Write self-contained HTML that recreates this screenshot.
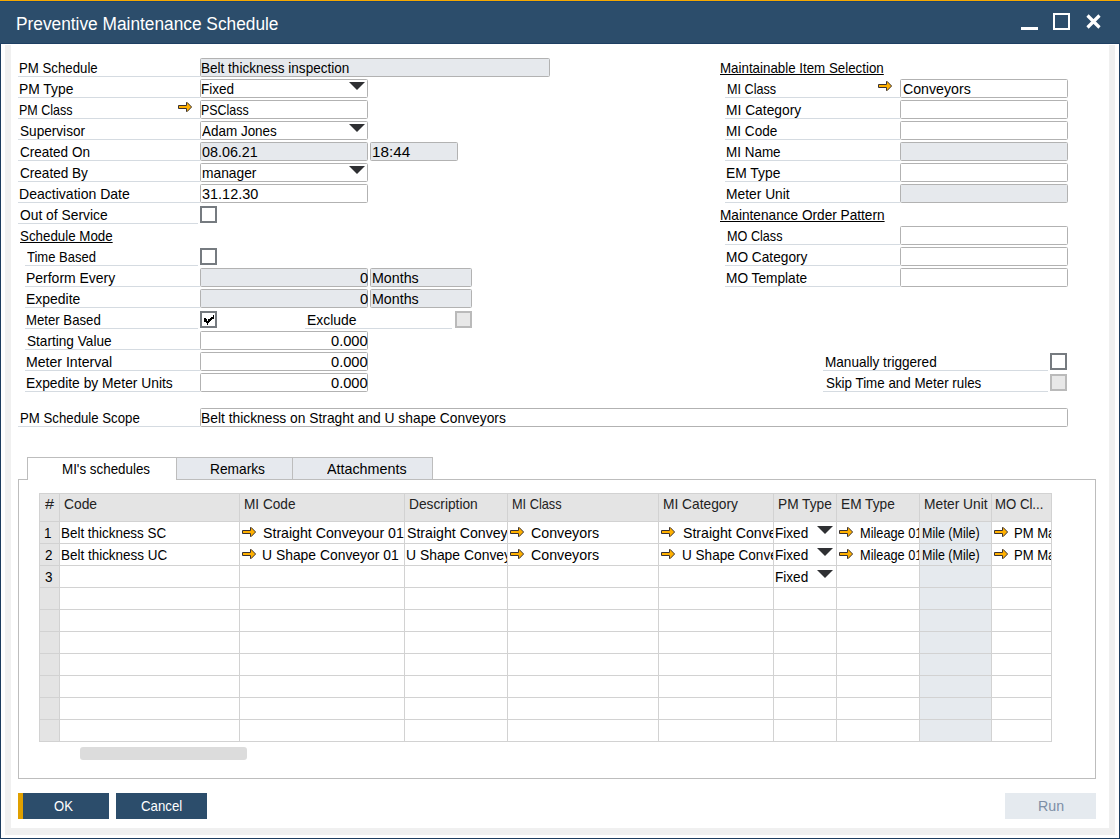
<!DOCTYPE html>
<html><head><meta charset="utf-8"><style>
html,body{margin:0;padding:0;width:1120px;height:839px;overflow:hidden;background:#fff}
body div{position:absolute}
.t{font-family:"Liberation Sans",sans-serif;font-size:14.5px;line-height:17px;color:#000;white-space:nowrap;transform-origin:0 0}
.f{box-sizing:border-box;border:1px solid #b2b2b2;border-radius:1.5px}
u{text-decoration:underline;text-underline-offset:1px}
svg{display:block}
</style></head><body>
<div style="left:0px;top:0px;width:1120px;height:839px;background:#fff"></div>
<div style="left:0px;top:0px;width:1120px;height:1px;background:#f5a800"></div>
<div style="left:0px;top:1px;width:1120px;height:1px;background:#1f4673"></div>
<div style="left:0px;top:2px;width:1120px;height:41px;background:#2c4d6b"></div>
<div style="left:0px;top:43px;width:1120px;height:1px;background:#1e3f62"></div>
<div style="left:0px;top:44px;width:1px;height:795px;background:#1d3d60"></div>
<div style="left:1119px;top:44px;width:1px;height:795px;background:#1d3d60"></div>
<div style="left:0px;top:838px;width:1120px;height:1px;background:#1d3d60"></div>
<div style="left:5px;top:45px;width:6px;height:790px;background:#f0f0f0"></div>
<div style="left:1109px;top:45px;width:6px;height:790px;background:#f0f0f0"></div>
<div style="left:5px;top:828px;width:1110px;height:7px;background:#f0f0f0"></div>
<div class="t" style="left:16.04px;top:11px;transform:scaleX(0.9608);font-size:18px;color:#fff;line-height:26px">Preventive Maintenance Schedule</div>
<div style="left:1021px;top:27px;width:17px;height:3px;background:#fff"></div>
<div style="left:1053px;top:13px;width:17px;height:17px;box-sizing:border-box;border:2px solid #fff"></div>
<div style="left:1086px;top:14px;width:15px;height:15px"><svg width="15" height="15" viewBox="0 0 15 15"><path d="M1.5 1.5L13.5 13.5M13.5 1.5L1.5 13.5" stroke="#fff" stroke-width="3.2"/></svg></div>
<div class="t" style="left:19.39px;top:60px;transform:scaleX(0.9122);">PM Schedule</div>
<div style="left:18px;top:76px;width:182px;height:1px;background:#d5dbe1"></div>
<div class="f" style="left:200px;top:58px;width:350px;height:19px;background:#e6e9ed"></div>
<div class="t" style="left:201.27px;top:60px;transform:scaleX(0.9340);">Belt thickness inspection</div>
<div class="t" style="left:19.35px;top:81px;transform:scaleX(0.9546);">PM Type</div>
<div style="left:18px;top:97px;width:182px;height:1px;background:#d5dbe1"></div>
<div class="f" style="left:200px;top:79px;width:168px;height:19px;background:#fff"></div>
<div style="left:349px;top:82px;width:16px;height:8px"><svg width="16" height="8" viewBox="0 0 16 8"><path d="M0 0H16L8 8Z" fill="#2f3033"/></svg></div>
<div class="t" style="left:201.37px;top:81px;transform:scaleX(0.9333);">Fixed</div>
<div class="t" style="left:19.44px;top:102px;transform:scaleX(0.8637);">PM Class</div>
<div style="left:18px;top:118px;width:182px;height:1px;background:#d5dbe1"></div>
<div style="left:178px;top:102px;width:15px;height:11px"><svg width="15" height="11" viewBox="0 0 15 11"><path d="M0.5 3.5H8.5V0.5H9.2L13.6 5L9.2 9.5H8.5V6.5H0.5Z" fill="#ffb000" stroke="#3a3232" stroke-width="1"/></svg></div>
<div class="f" style="left:200px;top:100px;width:168px;height:19px;background:#fff"></div>
<div class="t" style="left:201.44px;top:102px;transform:scaleX(0.8574);">PSClass</div>
<div class="t" style="left:20.30px;top:123px;transform:scaleX(0.9384);">Supervisor</div>
<div style="left:18px;top:139px;width:182px;height:1px;background:#d5dbe1"></div>
<div class="f" style="left:200px;top:121px;width:168px;height:19px;background:#fff"></div>
<div style="left:349px;top:124px;width:16px;height:8px"><svg width="16" height="8" viewBox="0 0 16 8"><path d="M0 0H16L8 8Z" fill="#2f3033"/></svg></div>
<div class="t" style="left:202.30px;top:123px;transform:scaleX(0.9284);">Adam Jones</div>
<div class="t" style="left:20.30px;top:144px;transform:scaleX(0.9333);">Created On</div>
<div style="left:18px;top:160px;width:182px;height:1px;background:#d5dbe1"></div>
<div class="f" style="left:200px;top:142px;width:168px;height:19px;background:#e6e9ed"></div>
<div class="t" style="left:202.30px;top:144px;transform:scaleX(0.9880);">08.06.21</div>
<div class="f" style="left:370px;top:142px;width:88px;height:19px;background:#e6e9ed"></div>
<div class="t" style="left:371.75px;top:144px;transform:scaleX(1.0533);">18:44</div>
<div class="t" style="left:20.30px;top:165px;transform:scaleX(0.9361);">Created By</div>
<div style="left:18px;top:181px;width:182px;height:1px;background:#d5dbe1"></div>
<div class="f" style="left:200px;top:163px;width:168px;height:19px;background:#fff"></div>
<div style="left:349px;top:166px;width:16px;height:8px"><svg width="16" height="8" viewBox="0 0 16 8"><path d="M0 0H16L8 8Z" fill="#2f3033"/></svg></div>
<div class="t" style="left:202.30px;top:165px;transform:scaleX(0.9512);">manager</div>
<div class="t" style="left:19.33px;top:186px;transform:scaleX(0.9684);">Deactivation Date</div>
<div style="left:18px;top:202px;width:182px;height:1px;background:#d5dbe1"></div>
<div class="f" style="left:200px;top:184px;width:168px;height:19px;background:#fff"></div>
<div class="t" style="left:202.30px;top:186px;transform:scaleX(0.9968);">31.12.30</div>
<div class="t" style="left:20.30px;top:207px;transform:scaleX(0.9531);">Out of Service</div>
<div style="left:18px;top:223px;width:180px;height:1px;background:#d5dbe1"></div>
<div style="left:200px;top:206px;width:17px;height:17px;box-sizing:border-box;border:2px solid #767b80;background:#fff"></div>
<div class="t" style="left:20.30px;top:228px;transform:scaleX(0.9196);"><u>Schedule Mode</u></div>
<div class="t" style="left:27.40px;top:249px;transform:scaleX(0.8976);">Time Based</div>
<div style="left:25px;top:265px;width:173px;height:1px;background:#d5dbe1"></div>
<div style="left:200px;top:248px;width:17px;height:17px;box-sizing:border-box;border:2px solid #767b80;background:#fff"></div>
<div class="t" style="left:26.44px;top:270px;transform:scaleX(0.9631);">Perform Every</div>
<div style="left:25px;top:286px;width:175px;height:1px;background:#d5dbe1"></div>
<div class="f" style="left:200px;top:268px;width:168px;height:19px;background:#e6e9ed"></div>
<div class="t" style="left:359.50px;top:270px;transform:scaleX(1.0125);">0</div>
<div class="f" style="left:370px;top:268px;width:102px;height:19px;background:#e6e9ed"></div>
<div class="t" style="left:371.52px;top:270px;transform:scaleX(0.9827);">Months</div>
<div class="t" style="left:26.44px;top:291px;transform:scaleX(0.9627);">Expedite</div>
<div style="left:25px;top:307px;width:175px;height:1px;background:#d5dbe1"></div>
<div class="f" style="left:200px;top:289px;width:168px;height:19px;background:#e6e9ed"></div>
<div class="t" style="left:359.50px;top:291px;transform:scaleX(1.0125);">0</div>
<div class="f" style="left:370px;top:289px;width:102px;height:19px;background:#e6e9ed"></div>
<div class="t" style="left:371.52px;top:291px;transform:scaleX(0.9827);">Months</div>
<div class="t" style="left:26.49px;top:312px;transform:scaleX(0.9095);">Meter Based</div>
<div style="left:25px;top:328px;width:173px;height:1px;background:#d5dbe1"></div>
<div style="left:200px;top:311px;width:17px;height:17px;box-sizing:border-box;border:2px solid #767b80;background:#fff"></div>
<div style="left:200px;top:311px;width:17px;height:17px"><svg width="17" height="17" viewBox="0 0 17 17" shape-rendering="crispEdges"><path d="M4 7h1v4h-1ZM5 7h1v4h-1ZM6 8h1v4h-1ZM7 10h1v4h-1ZM8 8h1v4h-1ZM9 8h1v3h-1ZM10 7h1v3h-1ZM11 6h1v3h-1ZM12 6h1v2h-1ZM13 4h1v4h-1Z" fill="#000"/></svg></div>
<div class="t" style="left:306.54px;top:312px;transform:scaleX(0.9600);">Exclude</div>
<div style="left:305px;top:328px;width:147px;height:1px;background:#d5dbe1"></div>
<div style="left:455px;top:311px;width:17px;height:17px;box-sizing:border-box;border:2px solid #bababa;background:#e8e8e8"></div>
<div class="t" style="left:27.40px;top:333px;transform:scaleX(0.9395);">Starting Value</div>
<div style="left:25px;top:349px;width:175px;height:1px;background:#d5dbe1"></div>
<div class="f" style="left:200px;top:331px;width:168px;height:19px;background:#fff"></div>
<div class="t" style="left:331.00px;top:333px;transform:scaleX(1.0105);">0.000</div>
<div class="t" style="left:26.43px;top:354px;transform:scaleX(0.9723);">Meter Interval</div>
<div style="left:25px;top:370px;width:175px;height:1px;background:#d5dbe1"></div>
<div class="f" style="left:200px;top:352px;width:168px;height:19px;background:#fff"></div>
<div class="t" style="left:331.00px;top:354px;transform:scaleX(1.0105);">0.000</div>
<div class="t" style="left:26.45px;top:375px;transform:scaleX(0.9536);">Expedite by Meter Units</div>
<div style="left:25px;top:391px;width:175px;height:1px;background:#d5dbe1"></div>
<div class="f" style="left:200px;top:373px;width:168px;height:19px;background:#fff"></div>
<div class="t" style="left:331.00px;top:375px;transform:scaleX(1.0105);">0.000</div>
<div class="t" style="left:20.09px;top:410px;transform:scaleX(0.9116);">PM Schedule Scope</div>
<div style="left:18px;top:426px;width:182px;height:1px;background:#d5dbe1"></div>
<div class="f" style="left:200px;top:408px;width:868px;height:19px;background:#fff"></div>
<div class="t" style="left:201.15px;top:410px;transform:scaleX(0.9528);">Belt thickness on Straght and U shape Conveyors</div>
<div class="t" style="left:719.58px;top:60px;transform:scaleX(0.9194);"><u>Maintainable Item Selection</u></div>
<div class="t" style="left:726.53px;top:81px;transform:scaleX(0.8705);">MI Class</div>
<div style="left:725px;top:97px;width:175px;height:1px;background:#d5dbe1"></div>
<div style="left:878px;top:81px;width:15px;height:11px"><svg width="15" height="11" viewBox="0 0 15 11"><path d="M0.5 3.5H8.5V0.5H9.2L13.6 5L9.2 9.5H8.5V6.5H0.5Z" fill="#ffb000" stroke="#3a3232" stroke-width="1"/></svg></div>
<div class="f" style="left:900px;top:79px;width:168px;height:19px;background:#fff"></div>
<div class="t" style="left:902.60px;top:81px;transform:scaleX(0.9775);">Conveyors</div>
<div class="t" style="left:726.45px;top:102px;transform:scaleX(0.9515);">MI Category</div>
<div style="left:725px;top:118px;width:175px;height:1px;background:#d5dbe1"></div>
<div class="f" style="left:900px;top:100px;width:168px;height:19px;background:#fff"></div>
<div class="t" style="left:726.46px;top:123px;transform:scaleX(0.9361);">MI Code</div>
<div style="left:725px;top:139px;width:175px;height:1px;background:#d5dbe1"></div>
<div class="f" style="left:900px;top:121px;width:168px;height:19px;background:#fff"></div>
<div class="t" style="left:726.47px;top:144px;transform:scaleX(0.9281);">MI Name</div>
<div style="left:725px;top:160px;width:175px;height:1px;background:#d5dbe1"></div>
<div class="f" style="left:900px;top:142px;width:168px;height:19px;background:#e6e9ed"></div>
<div class="t" style="left:726.45px;top:165px;transform:scaleX(0.9546);">EM Type</div>
<div style="left:725px;top:181px;width:175px;height:1px;background:#d5dbe1"></div>
<div class="f" style="left:900px;top:163px;width:168px;height:19px;background:#fff"></div>
<div class="t" style="left:726.45px;top:186px;transform:scaleX(0.9522);">Meter Unit</div>
<div style="left:725px;top:202px;width:175px;height:1px;background:#d5dbe1"></div>
<div class="f" style="left:900px;top:184px;width:168px;height:19px;background:#e6e9ed"></div>
<div class="t" style="left:719.56px;top:207px;transform:scaleX(0.9411);"><u>Maintenance Order Pattern</u></div>
<div class="t" style="left:726.53px;top:228px;transform:scaleX(0.8719);">MO Class</div>
<div style="left:725px;top:244px;width:175px;height:1px;background:#d5dbe1"></div>
<div class="f" style="left:900px;top:226px;width:168px;height:19px;background:#fff"></div>
<div class="t" style="left:726.46px;top:249px;transform:scaleX(0.9445);">MO Category</div>
<div style="left:725px;top:265px;width:175px;height:1px;background:#d5dbe1"></div>
<div class="f" style="left:900px;top:247px;width:168px;height:19px;background:#fff"></div>
<div class="t" style="left:726.46px;top:270px;transform:scaleX(0.9441);">MO Template</div>
<div style="left:725px;top:286px;width:175px;height:1px;background:#d5dbe1"></div>
<div class="f" style="left:900px;top:268px;width:168px;height:19px;background:#fff"></div>
<div class="t" style="left:824.76px;top:354px;transform:scaleX(0.9364);">Manually triggered</div>
<div style="left:823px;top:370px;width:225px;height:1px;background:#d5dbe1"></div>
<div style="left:1050px;top:353px;width:17px;height:17px;box-sizing:border-box;border:2px solid #767b80;background:#fff"></div>
<div class="t" style="left:825.70px;top:375px;transform:scaleX(0.9220);">Skip Time and Meter rules</div>
<div style="left:823px;top:391px;width:225px;height:1px;background:#d5dbe1"></div>
<div style="left:1050px;top:374px;width:17px;height:17px;box-sizing:border-box;border:2px solid #bababa;background:#e8e8e8"></div>
<div style="left:18px;top:479px;width:1078px;height:300px;box-sizing:border-box;border:1px solid #bdbdbd;background:#fff"></div>
<div style="left:176px;top:457px;width:117px;height:23px;box-sizing:border-box;border:1px solid #bdbdbd;background:#e6e9ee"></div>
<div style="left:292px;top:457px;width:141px;height:23px;box-sizing:border-box;border:1px solid #bdbdbd;background:#e6e9ee"></div>
<div style="left:27px;top:457px;width:150px;height:23px;box-sizing:border-box;border:1px solid #bdbdbd;border-bottom:none;background:#fff"></div>
<div class="t" style="left:62.28px;top:461px;transform:scaleX(0.9225);">MI's schedules</div>
<div class="t" style="left:210.25px;top:461px;transform:scaleX(0.9479);">Remarks</div>
<div class="t" style="left:326.80px;top:461px;transform:scaleX(0.9870);">Attachments</div>
<div style="left:39px;top:493px;width:1013px;height:28px;background:#e4e4e4"></div>
<div style="left:39px;top:521px;width:20px;height:220px;background:#e4e4e4"></div>
<div style="left:919px;top:521px;width:73px;height:220px;background:#e6eaee"></div>
<div style="left:39px;top:493px;width:1px;height:249px;background:#d2d2d2"></div>
<div style="left:59px;top:493px;width:1px;height:249px;background:#d2d2d2"></div>
<div style="left:239px;top:493px;width:1px;height:249px;background:#d2d2d2"></div>
<div style="left:404px;top:493px;width:1px;height:249px;background:#d2d2d2"></div>
<div style="left:507px;top:493px;width:1px;height:249px;background:#d2d2d2"></div>
<div style="left:658px;top:493px;width:1px;height:249px;background:#d2d2d2"></div>
<div style="left:773px;top:493px;width:1px;height:249px;background:#d2d2d2"></div>
<div style="left:836px;top:493px;width:1px;height:249px;background:#d2d2d2"></div>
<div style="left:919px;top:493px;width:1px;height:249px;background:#d2d2d2"></div>
<div style="left:991px;top:493px;width:1px;height:249px;background:#d2d2d2"></div>
<div style="left:1051px;top:493px;width:1px;height:249px;background:#d2d2d2"></div>
<div style="left:39px;top:493px;width:1013px;height:1px;background:#d2d2d2"></div>
<div style="left:39px;top:521px;width:1013px;height:1px;background:#d2d2d2"></div>
<div style="left:39px;top:543px;width:1013px;height:1px;background:#d2d2d2"></div>
<div style="left:39px;top:565px;width:1013px;height:1px;background:#d2d2d2"></div>
<div style="left:39px;top:587px;width:1013px;height:1px;background:#d2d2d2"></div>
<div style="left:39px;top:609px;width:1013px;height:1px;background:#d2d2d2"></div>
<div style="left:39px;top:631px;width:1013px;height:1px;background:#d2d2d2"></div>
<div style="left:39px;top:653px;width:1013px;height:1px;background:#d2d2d2"></div>
<div style="left:39px;top:675px;width:1013px;height:1px;background:#d2d2d2"></div>
<div style="left:39px;top:697px;width:1013px;height:1px;background:#d2d2d2"></div>
<div style="left:39px;top:719px;width:1013px;height:1px;background:#d2d2d2"></div>
<div style="left:39px;top:741px;width:1013px;height:1px;background:#d2d2d2"></div>
<div class="t" style="left:44.75px;top:496px;transform:scaleX(1.1250);color:#222">#</div>
<div class="t" style="left:64.00px;top:496px;transform:scaleX(0.9538);color:#222">Code</div>
<div class="t" style="left:243.56px;top:496px;transform:scaleX(0.9398);color:#222">MI Code</div>
<div class="t" style="left:408.55px;top:496px;transform:scaleX(0.9480);color:#222">Description</div>
<div class="t" style="left:511.62px;top:496px;transform:scaleX(0.8795);color:#222">MI Class</div>
<div class="t" style="left:662.80px;top:496px;transform:scaleX(0.9496);color:#222">MI Category</div>
<div class="t" style="left:777.81px;top:496px;transform:scaleX(0.9439);color:#222">PM Type</div>
<div class="t" style="left:840.81px;top:496px;transform:scaleX(0.9439);color:#222">EM Type</div>
<div class="t" style="left:923.55px;top:496px;transform:scaleX(0.9506);color:#222">Meter Unit</div>
<div class="t" style="left:995.49px;top:496px;transform:scaleX(0.9093);color:#222">MO Cl...</div>
<div class="t" style="left:43.57px;top:525px;transform:scaleX(0.9300);">1</div>
<div class="t" style="left:44.50px;top:547px;transform:scaleX(0.9300);">2</div>
<div class="t" style="left:44.50px;top:569px;transform:scaleX(0.9300);">3</div>
<div style="left:60px;top:522px;width:179px;height:21px;overflow:hidden"><div class="t" style="left:1.17px;top:3px;transform:scaleX(0.9255);">Belt thickness SC</div></div>
<div style="left:240px;top:522px;width:164px;height:21px;overflow:hidden"><div class="t" style="left:23.30px;top:3px;transform:scaleX(0.9763);">Straight Conveyour 01</div></div>
<div style="left:242px;top:527px;width:15px;height:11px"><svg width="15" height="11" viewBox="0 0 15 11"><path d="M0.5 3.5H8.5V0.5H9.2L13.6 5L9.2 9.5H8.5V6.5H0.5Z" fill="#ffb000" stroke="#3a3232" stroke-width="1"/></svg></div>
<div style="left:405px;top:522px;width:102px;height:21px;overflow:hidden"><div class="t" style="left:2.20px;top:3px;transform:scaleX(0.9760);">Straight Conveyor 01</div></div>
<div style="left:508px;top:522px;width:150px;height:21px;overflow:hidden"><div class="t" style="left:23.25px;top:3px;transform:scaleX(0.9811);">Conveyors</div></div>
<div style="left:510px;top:527px;width:15px;height:11px"><svg width="15" height="11" viewBox="0 0 15 11"><path d="M0.5 3.5H8.5V0.5H9.2L13.6 5L9.2 9.5H8.5V6.5H0.5Z" fill="#ffb000" stroke="#3a3232" stroke-width="1"/></svg></div>
<div style="left:659px;top:522px;width:114px;height:21px;overflow:hidden"><div class="t" style="left:23.50px;top:3px;transform:scaleX(0.9760);">Straight Conveyor</div></div>
<div style="left:661px;top:527px;width:15px;height:11px"><svg width="15" height="11" viewBox="0 0 15 11"><path d="M0.5 3.5H8.5V0.5H9.2L13.6 5L9.2 9.5H8.5V6.5H0.5Z" fill="#ffb000" stroke="#3a3232" stroke-width="1"/></svg></div>
<div style="left:774px;top:522px;width:62px;height:21px;overflow:hidden"><div class="t" style="left:1.31px;top:3px;transform:scaleX(0.9377);">Fixed</div></div>
<div style="left:837px;top:522px;width:82px;height:21px;overflow:hidden"><div class="t" style="left:22.62px;top:3px;transform:scaleX(0.8802);">Mileage 01</div></div>
<div style="left:839px;top:527px;width:15px;height:11px"><svg width="15" height="11" viewBox="0 0 15 11"><path d="M0.5 3.5H8.5V0.5H9.2L13.6 5L9.2 9.5H8.5V6.5H0.5Z" fill="#ffb000" stroke="#3a3232" stroke-width="1"/></svg></div>
<div style="left:920px;top:522px;width:71px;height:21px;overflow:hidden"><div class="t" style="left:1.64px;top:3px;transform:scaleX(0.8612);">Mile (Mile)</div></div>
<div style="left:992px;top:522px;width:59px;height:21px;overflow:hidden"><div class="t" style="left:22.10px;top:3px;transform:scaleX(0.9000);">PM Maintenance</div></div>
<div style="left:994px;top:527px;width:15px;height:11px"><svg width="15" height="11" viewBox="0 0 15 11"><path d="M0.5 3.5H8.5V0.5H9.2L13.6 5L9.2 9.5H8.5V6.5H0.5Z" fill="#ffb000" stroke="#3a3232" stroke-width="1"/></svg></div>
<div style="left:60px;top:544px;width:179px;height:21px;overflow:hidden"><div class="t" style="left:1.17px;top:3px;transform:scaleX(0.9278);">Belt thickness UC</div></div>
<div style="left:240px;top:544px;width:164px;height:21px;overflow:hidden"><div class="t" style="left:22.34px;top:3px;transform:scaleX(0.9583);">U Shape Conveyor 01</div></div>
<div style="left:242px;top:549px;width:15px;height:11px"><svg width="15" height="11" viewBox="0 0 15 11"><path d="M0.5 3.5H8.5V0.5H9.2L13.6 5L9.2 9.5H8.5V6.5H0.5Z" fill="#ffb000" stroke="#3a3232" stroke-width="1"/></svg></div>
<div style="left:405px;top:544px;width:102px;height:21px;overflow:hidden"><div class="t" style="left:1.24px;top:3px;transform:scaleX(0.9580);">U Shape Conveyor 01</div></div>
<div style="left:508px;top:544px;width:150px;height:21px;overflow:hidden"><div class="t" style="left:23.25px;top:3px;transform:scaleX(0.9811);">Conveyors</div></div>
<div style="left:510px;top:549px;width:15px;height:11px"><svg width="15" height="11" viewBox="0 0 15 11"><path d="M0.5 3.5H8.5V0.5H9.2L13.6 5L9.2 9.5H8.5V6.5H0.5Z" fill="#ffb000" stroke="#3a3232" stroke-width="1"/></svg></div>
<div style="left:659px;top:544px;width:114px;height:21px;overflow:hidden"><div class="t" style="left:22.57px;top:3px;transform:scaleX(0.9350);">U Shape Conveyor</div></div>
<div style="left:661px;top:549px;width:15px;height:11px"><svg width="15" height="11" viewBox="0 0 15 11"><path d="M0.5 3.5H8.5V0.5H9.2L13.6 5L9.2 9.5H8.5V6.5H0.5Z" fill="#ffb000" stroke="#3a3232" stroke-width="1"/></svg></div>
<div style="left:774px;top:544px;width:62px;height:21px;overflow:hidden"><div class="t" style="left:1.31px;top:3px;transform:scaleX(0.9377);">Fixed</div></div>
<div style="left:837px;top:544px;width:82px;height:21px;overflow:hidden"><div class="t" style="left:22.62px;top:3px;transform:scaleX(0.8802);">Mileage 01</div></div>
<div style="left:839px;top:549px;width:15px;height:11px"><svg width="15" height="11" viewBox="0 0 15 11"><path d="M0.5 3.5H8.5V0.5H9.2L13.6 5L9.2 9.5H8.5V6.5H0.5Z" fill="#ffb000" stroke="#3a3232" stroke-width="1"/></svg></div>
<div style="left:920px;top:544px;width:71px;height:21px;overflow:hidden"><div class="t" style="left:1.64px;top:3px;transform:scaleX(0.8612);">Mile (Mile)</div></div>
<div style="left:992px;top:544px;width:59px;height:21px;overflow:hidden"><div class="t" style="left:22.10px;top:3px;transform:scaleX(0.9000);">PM Maintenance</div></div>
<div style="left:994px;top:549px;width:15px;height:11px"><svg width="15" height="11" viewBox="0 0 15 11"><path d="M0.5 3.5H8.5V0.5H9.2L13.6 5L9.2 9.5H8.5V6.5H0.5Z" fill="#ffb000" stroke="#3a3232" stroke-width="1"/></svg></div>
<div style="left:774px;top:566px;width:62px;height:21px;overflow:hidden"><div class="t" style="left:1.31px;top:3px;transform:scaleX(0.9377);">Fixed</div></div>
<div style="left:817px;top:526px;width:16px;height:8px"><svg width="16" height="8" viewBox="0 0 16 8"><path d="M0 0H16L8 8Z" fill="#2f3033"/></svg></div>
<div style="left:817px;top:548px;width:16px;height:8px"><svg width="16" height="8" viewBox="0 0 16 8"><path d="M0 0H16L8 8Z" fill="#2f3033"/></svg></div>
<div style="left:817px;top:570px;width:16px;height:8px"><svg width="16" height="8" viewBox="0 0 16 8"><path d="M0 0H16L8 8Z" fill="#2f3033"/></svg></div>
<div style="left:80px;top:747px;width:167px;height:13px;background:#dcdcdc;border-radius:3px"></div>
<div style="left:18px;top:793px;width:91px;height:26px;background:#2c4d6b"></div>
<div style="left:18px;top:793px;width:5px;height:26px;background:#e0a000"></div>
<div class="t" style="left:54.20px;top:798px;transform:scaleX(0.9023);color:#fff">OK</div>
<div style="left:116px;top:793px;width:91px;height:26px;background:#2c4d6b"></div>
<div class="t" style="left:141.25px;top:798px;transform:scaleX(0.9129);color:#fff">Cancel</div>
<div style="left:1005px;top:793px;width:91px;height:26px;background:#e5eaef"></div>
<div class="t" style="left:1037.52px;top:798px;transform:scaleX(0.9790);color:#7d8ea6">Run</div>
</body></html>
